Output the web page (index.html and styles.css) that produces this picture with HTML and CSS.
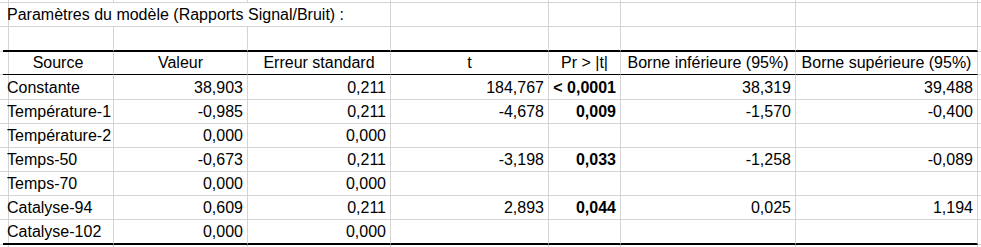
FILE: index.html
```html
<!DOCTYPE html>
<html lang="fr">
<head>
<meta charset="utf-8">
<title>Paramètres du modèle</title>
<link rel="stylesheet" href="styles.css">
</head>
<body>
<div class="sheet">
  <!-- row 0 (partial) -->
  <div class="c"></div><div class="c"></div><div class="c"></div><div class="c"></div><div class="c"></div><div class="c"></div><div class="c"></div><div class="c"></div><div class="c"></div>

  <!-- title row -->
  <div class="c"></div>
  <div class="c title">Paramètres du modèle (Rapports Signal/Bruit) :</div>
  <div class="c"></div><div class="c"></div><div class="c"></div><div class="c"></div><div class="c"></div>

  <!-- empty row -->
  <div class="c"></div>
  <div class="c top"></div><div class="c top"></div><div class="c top"></div><div class="c top"></div><div class="c top"></div><div class="c top"></div><div class="c top"></div>
  <div class="c"></div>

  <!-- header row -->
  <div class="c"></div>
  <div class="c hd">Source</div>
  <div class="c hd">Valeur</div>
  <div class="c hd">Erreur standard</div>
  <div class="c hd">t</div>
  <div class="c hd">Pr &gt; |t|</div>
  <div class="c hd">Borne inférieure (95%)</div>
  <div class="c hd">Borne supérieure (95%)</div>
  <div class="c"></div>

  <!-- data rows -->
  <div class="c"></div>
  <div class="c lbl">Constante</div>
  <div class="c num">38,903</div>
  <div class="c num">0,211</div>
  <div class="c num">184,767</div>
  <div class="c num b">&lt; 0,0001</div>
  <div class="c num">38,319</div>
  <div class="c num">39,488</div>
  <div class="c"></div>

  <div class="c"></div>
  <div class="c lbl">Température-1</div>
  <div class="c num">-0,985</div>
  <div class="c num">0,211</div>
  <div class="c num">-4,678</div>
  <div class="c num b">0,009</div>
  <div class="c num">-1,570</div>
  <div class="c num">-0,400</div>
  <div class="c"></div>

  <div class="c"></div>
  <div class="c lbl">Température-2</div>
  <div class="c num">0,000</div>
  <div class="c num">0,000</div>
  <div class="c num"></div>
  <div class="c num b"></div>
  <div class="c num"></div>
  <div class="c num"></div>
  <div class="c"></div>

  <div class="c"></div>
  <div class="c lbl">Temps-50</div>
  <div class="c num">-0,673</div>
  <div class="c num">0,211</div>
  <div class="c num">-3,198</div>
  <div class="c num b">0,033</div>
  <div class="c num">-1,258</div>
  <div class="c num">-0,089</div>
  <div class="c"></div>

  <div class="c"></div>
  <div class="c lbl">Temps-70</div>
  <div class="c num">0,000</div>
  <div class="c num">0,000</div>
  <div class="c num"></div>
  <div class="c num b"></div>
  <div class="c num"></div>
  <div class="c num"></div>
  <div class="c"></div>

  <div class="c"></div>
  <div class="c lbl">Catalyse-94</div>
  <div class="c num">0,609</div>
  <div class="c num">0,211</div>
  <div class="c num">2,893</div>
  <div class="c num b">0,044</div>
  <div class="c num">0,025</div>
  <div class="c num">1,194</div>
  <div class="c"></div>

  <div class="c"></div>
  <div class="c lbl last">Catalyse-102</div>
  <div class="c num last">0,000</div>
  <div class="c num last">0,000</div>
  <div class="c num last"></div>
  <div class="c num b last"></div>
  <div class="c num last"></div>
  <div class="c num last"></div>
  <div class="c"></div>

  <!-- trailing row -->
  <div class="c tail"></div><div class="c tail"></div><div class="c tail"></div><div class="c tail"></div><div class="c tail"></div><div class="c tail"></div><div class="c tail"></div><div class="c tail"></div><div class="c tail"></div>
</div>
</body>
</html>
```

FILE: styles.css
```css
html, body {
  margin: 0;
  padding: 0;
  background: #ffffff;
}

body {
  font-family: "Liberation Sans", Arial, sans-serif;
  font-size: 16px;
  color: #000000;
  overflow: hidden;
}

.sheet {
  display: grid;
  grid-template-columns: 3px 111px 134px 143px 158px 72px 175px 182px 1fr;
  grid-template-rows: 3px 24px 25px 23px 25px 24px 24px 24px 24px 24px 25px 2px;
  width: 981px;
}

.c {
  box-sizing: border-box;
  border-right: 1px solid #d4d4d4;
  border-bottom: 1px solid #d4d4d4;
  display: flex;
  align-items: flex-end;
  padding: 0 4px 2px 4px;
  line-height: 18px;
  white-space: nowrap;
  overflow: hidden;
  min-width: 0;
}

.title {
  grid-column: span 3;
  overflow: visible;
}

.top {
  border-bottom: 2px solid #000000;
}

.hd {
  justify-content: center;
  border-bottom-color: #000000;
  padding-left: 0;
  padding-right: 0;
}

.lbl {
  justify-content: flex-start;
}

.num {
  justify-content: flex-end;
}

.b {
  font-weight: bold;
}

.last {
  border-bottom: 2px solid #000000;
}

.tail {
  border-bottom: 0;
}
```
